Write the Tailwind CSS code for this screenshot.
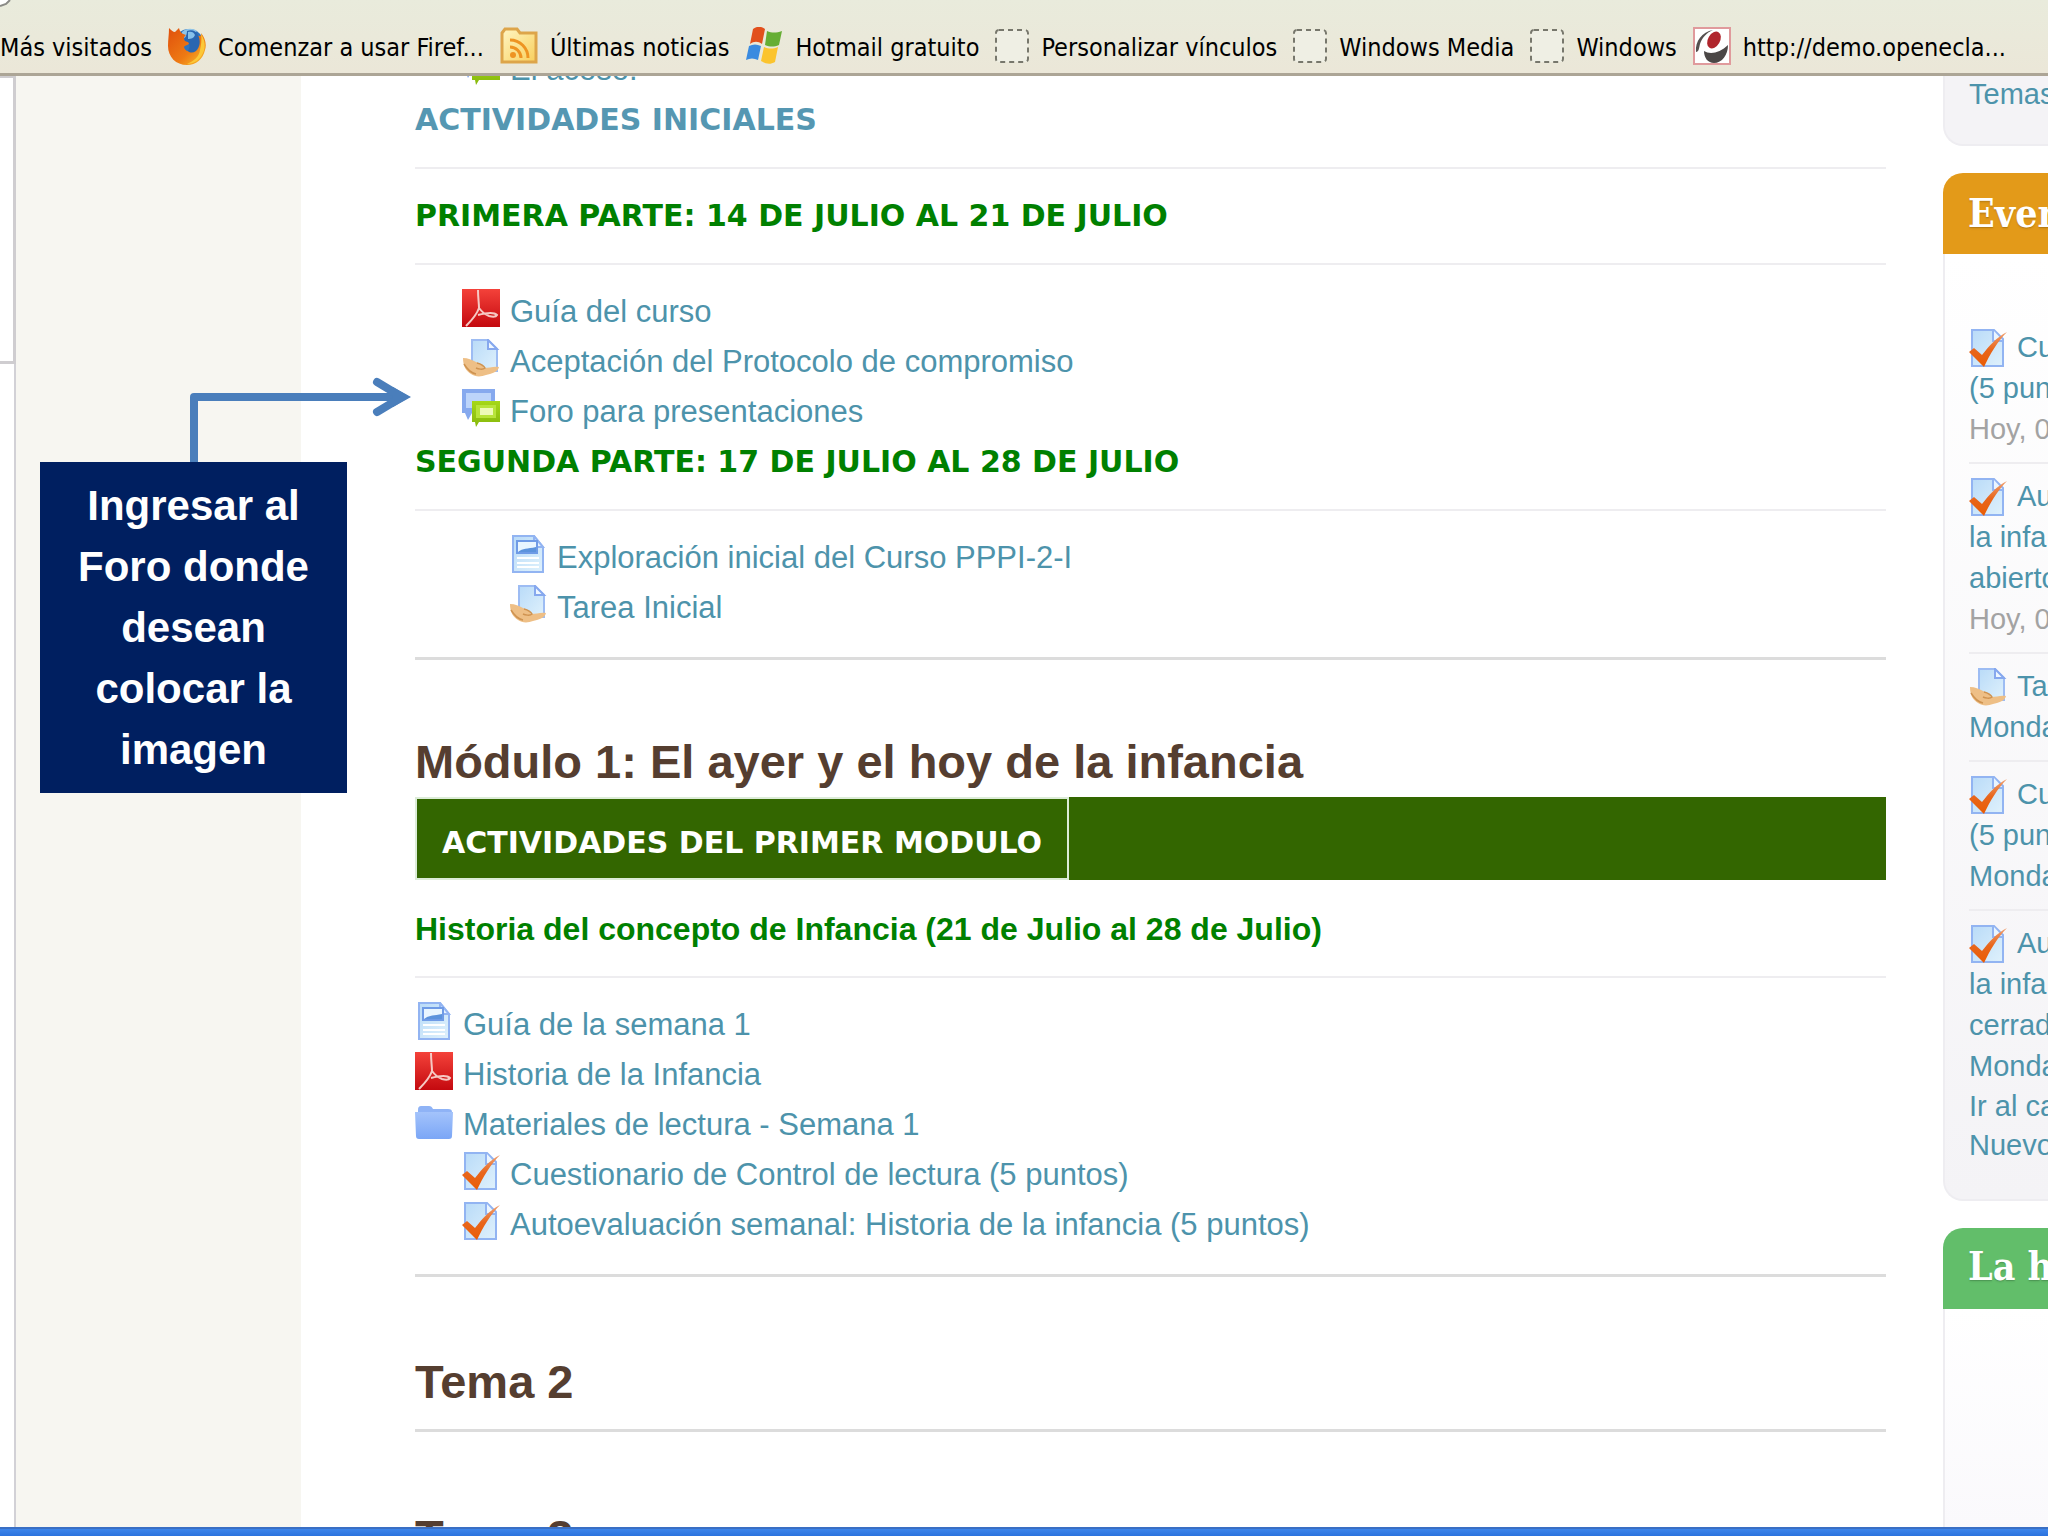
<!DOCTYPE html>
<html lang="es">

<head>
    <meta charset="UTF-8" />
    <meta name="viewport" content="width=device-width, initial-scale=1.0" />
    <title>Curso PPPI-2-I</title>
    <script src="https://cdn.jsdelivr.net/npm/@tailwindcss/browser@4"></script>
</head>

<body class="relative flex flex-col h-screen overflow-hidden bg-white font-['Liberation_Sans',Arial,sans-serif]">

    <!-- Icon set -->
    <svg class="absolute size-0" aria-hidden="true">
        <defs>
            <linearGradient id="g-page" x1="0" y1="0" x2="1" y2="1">
                <stop offset="0" stop-color="#b9dbf8" />
                <stop offset="1" stop-color="#dff1fc" />
            </linearGradient>
            <linearGradient id="g-red" x1="0" y1="0" x2="0" y2="1">
                <stop offset="0" stop-color="#f4423a" />
                <stop offset="1" stop-color="#c4090f" />
            </linearGradient>
            <linearGradient id="g-folder" x1="0" y1="0" x2="0" y2="1">
                <stop offset="0" stop-color="#a3c3fb" />
                <stop offset="1" stop-color="#7ba6f6" />
            </linearGradient>
            <linearGradient id="g-check" x1="0" y1="0" x2="0" y2="1">
                <stop offset="0" stop-color="#f0a070" />
                <stop offset="0.5" stop-color="#e8661c" />
                <stop offset="1" stop-color="#ea5c04" />
            </linearGradient>
            <linearGradient id="g-green" x1="0" y1="0" x2="0" y2="1">
                <stop offset="0" stop-color="#a6d818" />
                <stop offset="1" stop-color="#86b80c" />
            </linearGradient>
            <linearGradient id="g-feed" x1="0" y1="0" x2="1" y2="1">
                <stop offset="0" stop-color="#fff6c4" />
                <stop offset="1" stop-color="#f8cf5c" />
            </linearGradient>
            <linearGradient id="g-fox" x1="0" y1="0" x2="1" y2="1">
                <stop offset="0" stop-color="#e0500c" />
                <stop offset="0.6" stop-color="#ee7a14" />
                <stop offset="1" stop-color="#fbc42c" />
            </linearGradient>
            <symbol id="icon-pdf" viewBox="0 0 38 38">
                <rect width="38" height="38" fill="url(#g-red)" />
                <path d="M16 1c0 8 1 13 1 18-2 6-7 12-13 18M17 19c3 4 7 7 10 8 4 1 7 1 8-1-3-3-11-2-19 0" fill="none" stroke="#f6c9c4" stroke-width="2" />
            </symbol>
            <symbol id="icon-page" viewBox="0 0 38 38">
                <path d="M4 1h21l9 11v25H4z" fill="url(#g-page)" stroke="#92b4f2" stroke-width="2" />
                <path d="M25 1v11h9z" fill="#e6f2ff" stroke="#92b4f2" stroke-width="2" />
                <rect x="8" y="6" width="20" height="12" fill="#e9f6ff" stroke="#6f9be6" stroke-width="2" />
                <path d="M9 17c5-4 9-3 18-5v5z" fill="#5c93dc" />
                <path d="M8 23h22M8 28h22M8 32h22" stroke="#fff" stroke-width="2" />
            </symbol>
            <symbol id="icon-assign" viewBox="0 0 38 38">
                <path d="M10 1h16l9 9v22H10z" fill="url(#g-page)" stroke="#9dbcf3" stroke-width="2" />
                <path d="M26 1v9h9z" fill="#eef7ff" stroke="#86a8ee" stroke-width="2" />
                <path d="M1 19c5 0 9 2 13 4 3 1 7 3 8 6 5 0 10-2 15-1-1 5-8 7-13 8-5 2-11 2-15-1-5-3-8-8-8-16z" fill="#eebf86" />
                <path d="M15 24c4 1 7 3 8 5-2 2-7 1-9 0M2 25c3 5 7 9 12 10" fill="none" stroke="#cf9350" stroke-width="1.5" />
            </symbol>
            <symbol id="icon-forum" viewBox="0 0 38 38">
                <path d="M0 0h33v24H10l-4 7-3-7H0z" fill="#86a9ee" />
                <path d="M4 4h25v15H4z" fill="#bcd4fa" />
                <path d="M10 12h28v21H17l-3 5-1-5h-3z" fill="url(#g-green)" />
                <path d="M14 16h20v13H14z" fill="#b8e43a" />
                <path d="M18 19h13v7H18z" fill="#eefab8" />
            </symbol>
            <symbol id="icon-folder" viewBox="0 0 38 38">
                <path d="M3 8c0-3 1-4 3-4h8c2 0 3 1 4 3h15c3 0 4 1 4 3v24H3z" fill="#8fb3f6" />
                <path d="M0 10h38l-1 24c0 2-1 3-3 3H4c-2 0-3-1-3-3z" fill="url(#g-folder)" />
            </symbol>
            <symbol id="icon-quiz" viewBox="0 0 38 38">
                <path d="M3 1h22l9 9v27H3z" fill="url(#g-page)" stroke="#92b4f2" stroke-width="2" />
                <path d="M24 1v11h10" fill="#eaf5ff" stroke="#92b4f2" stroke-width="2" />
                <path d="M0 23l5-4 8 7C20 17 28 8 38 3c-9 9-17 22-23 35z" fill="url(#g-check)" />
            </symbol>
            <symbol id="icon-firefox" viewBox="0 0 38 38">
                <circle cx="21" cy="17" r="15" fill="#2f74bd" />
                <path d="M14 5c4-4 11-4 15-1l-7 6-8 1z" fill="#8fc4e8" />
                <path d="M1 1c2 2 4 4 6 4l4-4c1 4 3 6 7 7-2 2-3 3-1 6l5 1c0 3-5 3-6 5 1 5 9 7 12 1 3-6 2-9 0-13 4 2 6 1 5-2 4 5 6 11 4 17-2 9-9 15-18 15C8 38 0 30 0 19 0 12 1 8 1 1z" fill="url(#g-fox)" />
                <path d="M19 4c5-2 9 0 11 4 3 6 2 12-2 16-3 2-6 2-8 0 2-4 2-6 0-9l-3-1c-1-3 2-5 2-10z" fill="#2a66b0" />
                <path d="M20 5c3-1 6 0 7 3-1 3-4 4-7 4z" fill="#86c0ea" />
                <path d="M33 7c4 6 5 13 2 19-3 7-9 11-16 11 7-3 12-7 13-14 1-5 2-10 1-16z" fill="#fbc838" />
            </symbol>
            <symbol id="icon-feed" viewBox="0 0 38 38">
                <path d="M2 6l3-4h12l3 4h16v29H2z" fill="url(#g-feed)" stroke="#dda54a" stroke-width="3" />
                <circle cx="13" cy="28" r="3" fill="#ee9422" />
                <path d="M10 20c6 0 11 5 11 11M10 13c10 0 18 8 18 18" fill="none" stroke="#ee9422" stroke-width="3" />
            </symbol>
            <symbol id="icon-windows" viewBox="0 0 38 38">
                <path d="M8 2c4-3 8-3 12 0l-3 15c-4-3-8-3-12 0z" fill="#e2501c" />
                <path d="M22 4c5 2 9 2 15 0l-3 14c-5 2-9 2-14 0z" fill="#66ae34" />
                <path d="M4 19c4-2 8-2 12 0l-3 14c-4-2-8-2-12 0z" fill="#3a8be0" />
                <path d="M19 20c5 2 9 2 14 0l-3 15c-5 3-9 2-14-1z" fill="#fbc42e" />
            </symbol>
            <symbol id="icon-blank" viewBox="0 0 34 34">
                <rect x="1" y="1" width="32" height="32" rx="3" fill="#efefe4" stroke="#77776c" stroke-width="2" stroke-dasharray="5 4" />
            </symbol>
            <symbol id="icon-claroline" viewBox="0 0 38 38">
                <rect x="1" y="1" width="36" height="36" fill="#fff" stroke="#e09a9c" stroke-width="2" />
                <path d="M20 3C9 5 2 14 3 25c3 0 3-4 4-8 2-6 6-11 13-14z" fill="#55504f" />
                <ellipse cx="21" cy="13" rx="6" ry="9" transform="rotate(30 21 13)" fill="#b0252c" />
                <path d="M11 24c6 4 16 2 24-6 0 10-6 18-14 18-6 0-10-5-10-12z" fill="#4b4746" />
            </symbol>
        </defs>
    </svg>

    <!-- Bookmarks toolbar -->
    <nav class="relative z-10 shrink-0 h-[76px] border-b-3 border-[#aca596] bg-linear-to-b from-[#e9ebdc] to-[#ebe7d8]">
        <svg class="absolute left-0 top-0 size-3" viewBox="0 0 12 12">
            <path d="M0 0h10L7 3 0 6z" fill="#fff" />
            <path d="M0 6l6-2 4-4" fill="none" stroke="#8a8a86" stroke-width="2" />
        </svg>
        <ul class="flex items-center gap-4 pt-[27px] whitespace-nowrap text-[25px] leading-[38px] text-black font-['DejaVu_Sans_Condensed','Noto_Sans',sans-serif]">
            <li><a href="#">Más visitados</a></li>
            <li><a href="#" class="flex items-center gap-3"><svg class="size-[38px] mb-1"><use href="#icon-firefox" /></svg>Comenzar a usar Firef...</a></li>
            <li><a href="#" class="flex items-center gap-3"><svg class="size-[38px] mb-1"><use href="#icon-feed" /></svg>Últimas noticias</a></li>
            <li><a href="#" class="flex items-center gap-3"><svg class="size-[38px] mb-1"><use href="#icon-windows" /></svg>Hotmail gratuito</a></li>
            <li><a href="#" class="flex items-center gap-3"><svg class="size-[34px] mb-1"><use href="#icon-blank" /></svg>Personalizar vínculos</a></li>
            <li><a href="#" class="flex items-center gap-3"><svg class="size-[34px] mb-1"><use href="#icon-blank" /></svg>Windows Media</a></li>
            <li><a href="#" class="flex items-center gap-3"><svg class="size-[34px] mb-1"><use href="#icon-blank" /></svg>Windows</a></li>
            <li><a href="#" class="flex items-center gap-3"><svg class="size-[38px] mb-1"><use href="#icon-claroline" /></svg>http://demo.openecla...</a></li>
        </ul>
    </nav>

    <div class="flex flex-1 min-h-0 overflow-hidden">
        <!-- Browser side panel -->
        <div class="flex flex-col shrink-0 w-4">
            <div class="h-[288px] bg-white border-r-3 border-b-3 border-t-2 border-[#cfcdd0]"></div>
            <div class="flex-1 bg-white border-r-2 border-[#d2d1d6]"></div>
        </div>
        <div class="shrink-0 w-[285px] bg-[#f7f6f1]"></div>

        <!-- Course content -->
        <main class="flex-1 min-w-0 pl-[114px] pr-[57px] text-[31px] leading-[50px] text-[#4d93ab]">
            <section class="-mt-[31px] pb-6 border-b-3 border-[#dcdcdc]">
                <a href="#" class="flex items-center gap-[10px] ml-[47px]"><svg class="size-[38px] mb-2"><use href="#icon-forum" /></svg>El acoso.</a>
                <h3 class="font-['DejaVu_Sans',Verdana,sans-serif] font-bold text-[30px] text-[#5597b2]">ACTIVIDADES INICIALES</h3>
                <hr class="my-[22px] border-t-2 border-[#eeedf0]" />
                <h3 class="font-['DejaVu_Sans',Verdana,sans-serif] font-bold text-[30px] text-[#008000]">PRIMERA PARTE: 14 DE JULIO AL 21 DE JULIO</h3>
                <hr class="my-[22px] border-t-2 border-[#eeedf0]" />
                <ul class="ml-[47px]">
                    <li><a href="#" class="flex items-center gap-[10px]"><svg class="size-[38px] mb-2"><use href="#icon-pdf" /></svg>Guía del curso</a></li>
                    <li><a href="#" class="flex items-center gap-[10px]"><svg class="size-[38px] mb-2"><use href="#icon-assign" /></svg>Aceptación del Protocolo de compromiso</a></li>
                    <li><a href="#" class="flex items-center gap-[10px]"><svg class="size-[38px] mb-2"><use href="#icon-forum" /></svg>Foro para presentaciones</a></li>
                </ul>
                <h3 class="font-['DejaVu_Sans',Verdana,sans-serif] font-bold text-[30px] text-[#008000]">SEGUNDA PARTE: 17 DE JULIO AL 28 DE JULIO</h3>
                <hr class="my-[22px] border-t-2 border-[#eeedf0]" />
                <ul class="ml-[94px]">
                    <li><a href="#" class="flex items-center gap-[10px]"><svg class="size-[38px] mb-2"><use href="#icon-page" /></svg>Exploración inicial del Curso PPPI-2-I</a></li>
                    <li><a href="#" class="flex items-center gap-[10px]"><svg class="size-[38px] mb-2"><use href="#icon-assign" /></svg>Tarea Inicial</a></li>
                </ul>
            </section>

            <section class="pt-[72px] pb-6 border-b-3 border-[#dcdcdc]">
                <h2 class="mb-[5px] font-bold text-[47px] leading-[60px] text-[#553e30]">Módulo 1: El ayer y el hoy de la infancia</h2>
                <div class="flex mb-6 h-[83px] bg-[#336600]">
                    <h3 class="flex items-center px-[25px] pt-2 border-2 border-[#dcecd8] font-['DejaVu_Sans',Verdana,sans-serif] font-bold text-[30px] text-white">ACTIVIDADES DEL PRIMER MODULO</h3>
                </div>
                <h3 class="font-bold text-[32px] text-[#008000]">Historia del concepto de Infancia (21 de Julio al 28 de Julio)</h3>
                <hr class="my-[22px] border-t-2 border-[#eeedf0]" />
                <ul>
                    <li><a href="#" class="flex items-center gap-[10px]"><svg class="size-[38px] mb-2"><use href="#icon-page" /></svg>Guía de la semana 1</a></li>
                    <li><a href="#" class="flex items-center gap-[10px]"><svg class="size-[38px] mb-2"><use href="#icon-pdf" /></svg>Historia de la Infancia</a></li>
                    <li><a href="#" class="flex items-center gap-[10px]"><svg class="size-[38px] mb-2"><use href="#icon-folder" /></svg>Materiales de lectura - Semana 1</a></li>
                    <li class="ml-[47px]"><a href="#" class="flex items-center gap-[10px]"><svg class="size-[38px] mb-2"><use href="#icon-quiz" /></svg>Cuestionario de Control de lectura (5 puntos)</a></li>
                    <li class="ml-[47px]"><a href="#" class="flex items-center gap-[10px]"><svg class="size-[38px] mb-2"><use href="#icon-quiz" /></svg>Autoevaluación semanal: Historia de la infancia (5 puntos)</a></li>
                </ul>
            </section>

            <section class="pt-[75px] pb-[17px] border-b-3 border-[#dcdcdc]">
                <h2 class="font-bold text-[47px] leading-[60px] text-[#553e30]">Tema 2</h2>
            </section>
            <section class="pt-[75px]">
                <h2 class="font-bold text-[47px] leading-[60px] text-[#553e30]">Tema 3</h2>
            </section>
        </main>

        <!-- Side blocks, they run past the right edge -->
        <aside class="shrink-0 w-[105px] flex flex-col gap-[27px] overflow-hidden whitespace-nowrap text-[29px] leading-[41px] text-[#4d93ab]">
            <div class="shrink-0 h-[70px] pl-6 border-l-2 border-b-2 border-[#eeedf1] rounded-bl-[20px] bg-[#f4f3f6] leading-[37px]">
                <a href="#">Temas</a>
            </div>

            <div class="shrink-0">
                <h2 class="h-[81px] pl-[25px] rounded-tl-[20px] bg-[#e39a19] font-['DejaVu_Serif_Condensed','DejaVu_Serif',serif] font-bold text-[39px] leading-[81px] text-white text-shadow-sm">Even</h2>
                <div class="pt-[73px] pb-[34px] pl-6 border-l-2 border-b-2 border-[#eeedf1] rounded-bl-[20px] bg-linear-to-b from-white to-[#f4f3f6]">
                    <ul>
                        <li class="pb-3 border-b-2 border-[#eeedf0]">
                            <a href="#" class="flex gap-[10px]"><svg class="shrink-0 size-[38px] mt-[2px]"><use href="#icon-quiz" /></svg>Cu</a>
                            <a href="#">(5 pun</a>
                            <p class="text-[#a3a3a3]">Hoy, 0</p>
                        </li>
                        <li class="py-3 border-b-2 border-[#eeedf0]">
                            <a href="#" class="flex gap-[10px]"><svg class="shrink-0 size-[38px] mt-[2px]"><use href="#icon-quiz" /></svg>Au</a>
                            <a href="#">la infa<br />abierto</a>
                            <p class="text-[#a3a3a3]">Hoy, 0</p>
                        </li>
                        <li class="py-3 border-b-2 border-[#eeedf0]">
                            <a href="#" class="flex gap-[10px]"><svg class="shrink-0 size-[38px] mt-[2px]"><use href="#icon-assign" /></svg>Ta</a>
                            <a href="#">Monda</a>
                        </li>
                        <li class="py-3 border-b-2 border-[#eeedf0]">
                            <a href="#" class="flex gap-[10px]"><svg class="shrink-0 size-[38px] mt-[2px]"><use href="#icon-quiz" /></svg>Cu</a>
                            <a href="#">(5 pun<br />Monda</a>
                        </li>
                        <li class="pt-3">
                            <a href="#" class="flex gap-[10px]"><svg class="shrink-0 size-[38px] mt-[2px]"><use href="#icon-quiz" /></svg>Au</a>
                            <a href="#">la infa<br />cerrad<br />Monda</a>
                        </li>
                    </ul>
                    <p class="leading-[39px]"><a href="#">Ir al ca</a><br /><a href="#">Nuevo</a></p>
                </div>
            </div>

            <div class="flex-1 flex flex-col">
                <h2 class="shrink-0 h-[81px] pl-[25px] rounded-tl-[20px] bg-[#62be6a] font-['DejaVu_Serif_Condensed','DejaVu_Serif',serif] font-bold text-[39px] leading-[76px] text-white text-shadow-sm">La h</h2>
                <div class="flex-1 border-l-2 border-[#eeedf1] bg-linear-to-b from-white to-[#faf9fc]"></div>
            </div>
        </aside>
    </div>

    <!-- Taskbar edge -->
    <footer class="relative z-10 shrink-0 h-[9px] border-t-2 border-[#3a6fc4] bg-linear-to-b from-[#3d85ea] to-[#2b72de]"></footer>

    <!-- Callout over the page -->
    <svg class="absolute left-[190px] top-[376px] w-[222px] h-[86px]" viewBox="0 0 222 86" fill="none" stroke="#4a7ebb" stroke-width="8">
        <path d="M4 86V21H212" stroke-linejoin="round" />
        <path d="M187 6l25 15-25 15" stroke-linecap="round" />
        <path d="M203 11l18 10-18 10z" fill="#4a7ebb" stroke="none" />
    </svg>
    <div class="absolute left-10 top-[462px] w-[307px] px-8 py-[13px] bg-[#001f60] text-center font-bold text-[42px] leading-[61px] text-white">
        Ingresar al Foro donde desean colocar la imagen
    </div>
</body>

</html>
